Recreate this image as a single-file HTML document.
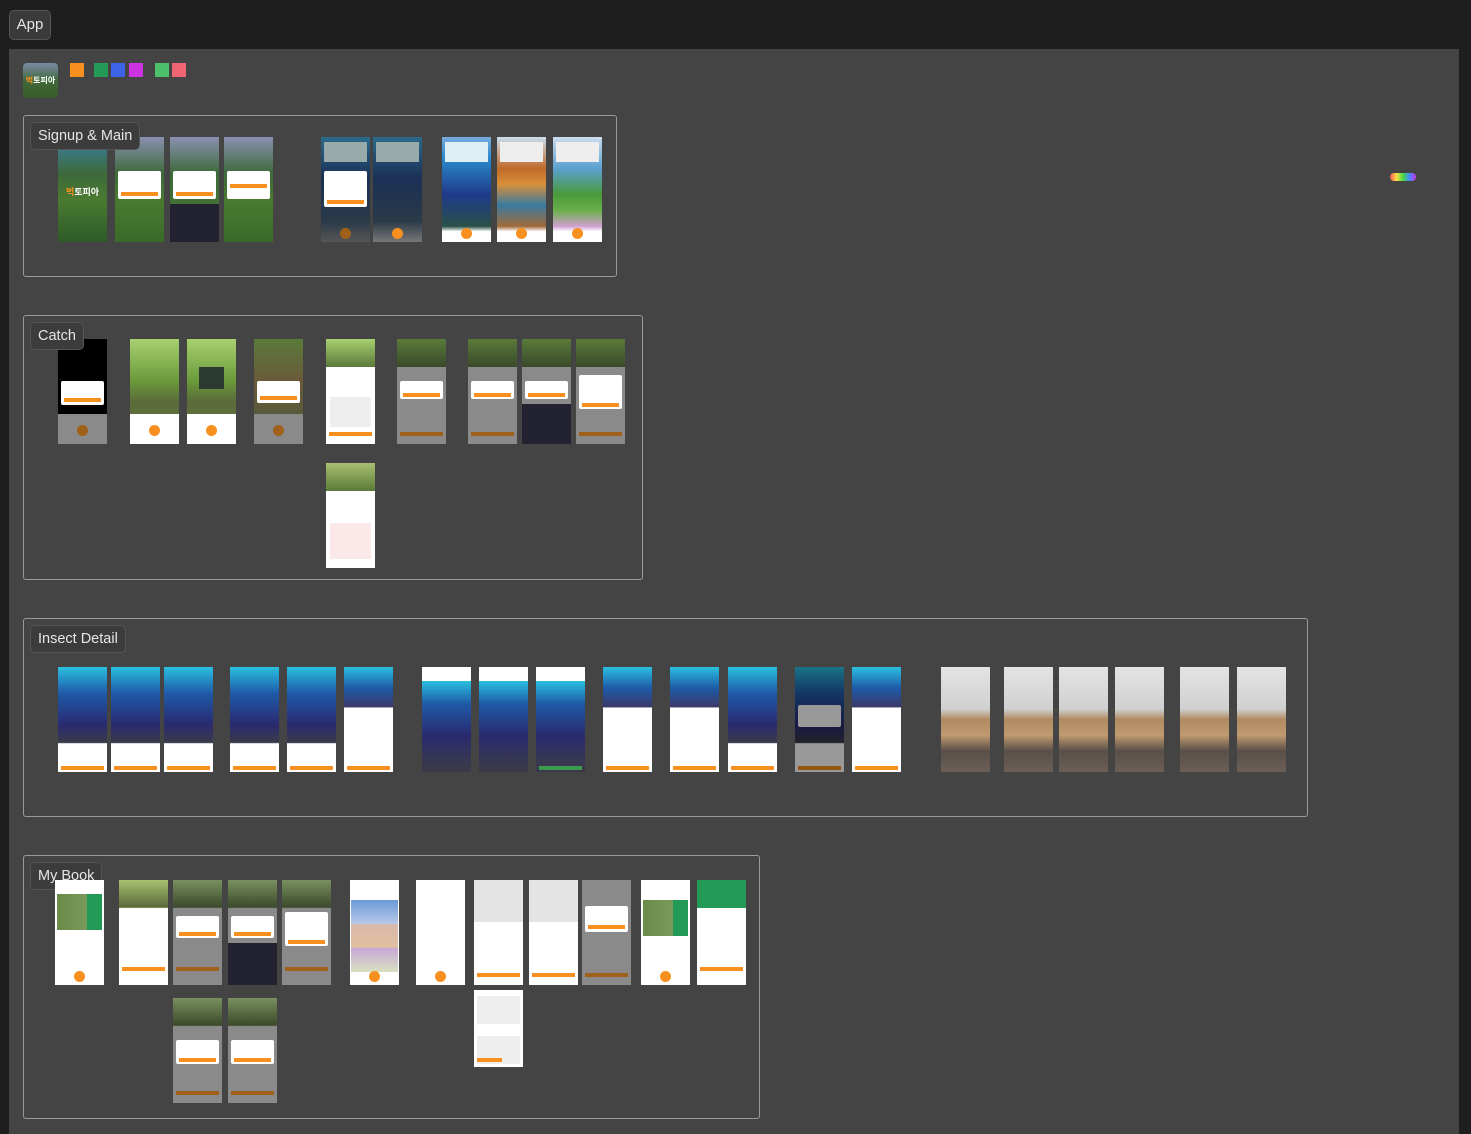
<!DOCTYPE html>
<html><head><meta charset="utf-8"><style>
*{margin:0;padding:0;box-sizing:border-box}
body{width:1471px;height:1134px;background:#1e1e1e;position:relative;overflow:hidden;font-family:"Liberation Sans","Noto Sans CJK KR",sans-serif}
.canvas{position:absolute;left:9px;top:49px;width:1450px;height:1085px;background:#444}
.app{position:absolute;left:9px;top:10px;width:42px;height:30px;background:#3a3a3a;border:1px solid #555;border-radius:5px;color:#e6e6e6;font-size:15px;line-height:28px;text-align:center}
.sec{position:absolute;border:1px solid #9a9a9a;border-radius:3px}
.lbl{position:absolute;left:30px;height:28px;background:#3c3c3c;border:1px solid #555;border-radius:5px;color:#e6e6e6;font-size:14.5px;line-height:26px;padding:0 7px}
.t{position:absolute;width:49px;height:105px;overflow:hidden}
.sw{position:absolute;top:63px;width:14px;height:14px}
.bar{position:absolute;left:3px;right:3px;height:4px;background:#f7901e}
.wb{position:absolute;left:0;right:0;bottom:0;background:#fff}
.gb{position:absolute;left:0;right:0;bottom:0;background:#8a8a8a}
.dlg{position:absolute;left:3px;right:3px;background:#fff;border-radius:2px}
.kb{position:absolute;left:0;right:0;bottom:0;height:38px;background:#222230}
.circ{position:absolute;left:19px;bottom:3px;width:11px;height:11px;border-radius:50%;background:#f7901e}
</style></head><body>
<div class="app">App</div>
<div class="canvas"></div>
<!-- logo -->
<div style="position:absolute;left:23px;top:63px;width:35px;height:35px;border-radius:4px;background:linear-gradient(#7a8aa8,#3f6a3a 50%,#3a5a2a);color:#fff;font-size:8px;font-weight:bold;line-height:35px;text-align:center"><span style="color:#f7901e">벅</span>토피아</div>
<div class="sw" style="left:70px;background:#f7901e"></div>
<div class="sw" style="left:94px;background:#239a55"></div>
<div class="sw" style="left:111px;background:#3d63e8"></div>
<div class="sw" style="left:129px;background:#cc33e0"></div>
<div class="sw" style="left:155px;background:#4cc06a"></div>
<div class="sw" style="left:172px;background:#f06474"></div>
<div style="position:absolute;left:1390px;top:173px;width:26px;height:8px;border-radius:4px;background:linear-gradient(90deg,#f55,#fd4,#4d4,#48f,#c3e)"></div>

<!-- Signup & Main -->
<div class="sec" style="left:23px;top:115px;width:594px;height:162px"></div>
<div class="t" style="left:58px;top:137px;background:linear-gradient(#3a7fa8,#3d6a3a 35%,#4a7a30 60%,#2e5a28)"><div style="position:absolute;top:48px;width:100%;text-align:center;color:#fff;font-size:9px;font-weight:bold"><span style="color:#f7901e">벅</span>토피아</div></div>
<div class="t" style="left:115px;top:137px;background:linear-gradient(#8a90b0,#3d6a3a 35%,#4a7a30 60%,#3a6a28)"><div class="dlg" style="top:34px;height:28px"><div class="bar" style="bottom:3px"></div></div></div>
<div class="t" style="left:170px;top:137px;background:linear-gradient(#8a90b0,#3d6a3a 35%,#4a7a30)"><div class="dlg" style="top:34px;height:28px"><div class="bar" style="bottom:3px"></div></div><div class="kb"></div></div>
<div class="t" style="left:224px;top:137px;background:linear-gradient(#8a90b0,#3d6a3a 35%,#4a7a30 60%,#3a6a28)"><div class="dlg" style="top:34px;height:28px"><div class="bar" style="bottom:11px"></div></div></div>
<div class="t" style="left:321px;top:137px;background:linear-gradient(#2a6a8a,#1b3055 40%,#2a3a48 80%,#555)"><div style="position:absolute;top:5px;left:3px;right:3px;height:20px;background:#9aa"></div><div class="dlg" style="top:34px;height:36px"><div class="bar" style="bottom:3px"></div></div><div class="circ" style="background:#a0601a"></div></div>
<div class="t" style="left:373px;top:137px;background:linear-gradient(#2a6a8a,#1b3055 40%,#2a3a48 80%,#777)"><div style="position:absolute;top:5px;left:3px;right:3px;height:20px;background:#9aa"></div><div class="circ"></div></div>
<div class="t" style="left:442px;top:137px;background:linear-gradient(#7ad,#2a8acc 20%,#1f3a8a 55%,#2a5048 85%,#fff 90%)"><div style="position:absolute;top:5px;left:3px;right:3px;height:20px;background:#ddeef4"></div><div class="circ"></div></div>
<div class="t" style="left:497px;top:137px;background:linear-gradient(#cde,#c06a2a 30%,#d8903a 45%,#3a7aa0 65%,#a06a3a 85%,#fff 90%)"><div style="position:absolute;top:5px;left:3px;right:3px;height:20px;background:#eee"></div><div class="circ"></div></div>
<div class="t" style="left:553px;top:137px;background:linear-gradient(#cde,#5aa0d0 30%,#4a9a3a 55%,#6ab04a 70%,#d0a0d0 85%,#fff 90%)"><div style="position:absolute;top:5px;left:3px;right:3px;height:20px;background:#eee"></div><div class="circ"></div></div>
<div class="lbl" style="top:122px">Signup &amp; Main</div>

<!-- Catch -->
<div class="sec" style="left:23px;top:315px;width:620px;height:265px"></div>
<div class="t" style="left:58px;top:339px;background:#000"><div class="dlg" style="top:42px;height:24px"><div class="bar" style="bottom:3px"></div></div><div class="gb" style="height:30px"><div class="circ" style="background:#a0601a;bottom:8px"></div></div></div>
<div class="t" style="left:130px;top:339px;background:linear-gradient(#a8d070,#6a9a3a 40%,#5a6a3a 60%,#6a7a40)"><div class="wb" style="height:30px"><div class="circ" style="bottom:8px"></div></div></div>
<div class="t" style="left:187px;top:339px;background:linear-gradient(#a8d070,#6a9a3a 40%,#5a6a3a 60%,#6a7a40)"><div style="position:absolute;left:12px;top:28px;width:25px;height:22px;background:#2a3a30"></div><div class="wb" style="height:30px"><div class="circ" style="bottom:8px"></div></div></div>
<div class="t" style="left:254px;top:339px;background:linear-gradient(#5a7a3a,#6a5a3a 40%,#4a5a3a)"><div class="dlg" style="top:42px;height:22px"><div class="bar" style="bottom:3px"></div></div><div class="gb" style="height:30px"><div class="circ" style="background:#a0601a;bottom:8px"></div></div></div>
<div class="t" style="left:326px;top:339px;background:#fff"><div style="height:28px;background:linear-gradient(#a8d070,#5a7a3a)"></div><div style="position:absolute;top:58px;left:4px;right:4px;height:30px;background:#eee"></div><div class="bar" style="bottom:8px"></div></div>
<div class="t" style="left:397px;top:339px;background:#8a8a8a"><div style="height:28px;background:linear-gradient(#5a7a3a,#3a4a2a)"></div><div class="dlg" style="top:42px;height:18px"><div class="bar" style="bottom:2px"></div></div><div class="bar" style="bottom:8px;background:#a0601a"></div></div>
<div class="t" style="left:468px;top:339px;background:#8a8a8a"><div style="height:28px;background:linear-gradient(#5a7a3a,#3a4a2a)"></div><div class="dlg" style="top:42px;height:18px"><div class="bar" style="bottom:2px"></div></div><div class="bar" style="bottom:8px;background:#a0601a"></div></div>
<div class="t" style="left:522px;top:339px;background:#8a8a8a"><div style="height:28px;background:linear-gradient(#5a7a3a,#3a4a2a)"></div><div class="dlg" style="top:42px;height:18px"><div class="bar" style="bottom:2px"></div></div><div class="kb" style="height:40px"></div></div>
<div class="t" style="left:576px;top:339px;background:#8a8a8a"><div style="height:28px;background:linear-gradient(#5a7a3a,#3a4a2a)"></div><div class="dlg" style="top:36px;height:34px"><div class="bar" style="bottom:2px"></div></div><div class="bar" style="bottom:8px;background:#a0601a"></div></div>
<div class="t" style="left:326px;top:463px;background:#fff"><div style="height:28px;background:linear-gradient(#a8c070,#5a7a3a)"></div><div style="position:absolute;top:60px;left:4px;right:4px;height:36px;background:#fbe8e8"></div></div>
<div class="lbl" style="top:322px">Catch</div>

<!-- Insect Detail -->
<div class="sec" style="left:23px;top:618px;width:1285px;height:199px"></div>
<div id="id"></div>
<div class="lbl" style="top:625px">Insect Detail</div>

<!-- My Book -->
<div class="sec" style="left:23px;top:855px;width:737px;height:264px"></div>
<div id="mb"></div>
<div class="lbl" style="top:862px">My Book</div>

<style>
.fd{background:linear-gradient(#2ac0e0,#1f5aa8 25%,#2a2a70 55%,#3a3a4a 72%,#fff 73%)}
.fdf{background:linear-gradient(#2ac0e0,#1f5aa8 25%,#2a2a70 60%,#3a3a4a 95%)}
.fdw{background:linear-gradient(#2ac0e0,#1f5aa8 20%,#3a3a6a 38%,#fff 39%)}
.rm{background:linear-gradient(#e4e4e4,#d0d0d0 40%,#b08a60 50%,#c09a70 65%,#5a5048 80%,#6a5e56)}
.wt{background:#fff}
</style>
<div class="t fd" style="left:58px;top:667px"><div class="bar" style="bottom:2px"></div></div>
<div class="t fd" style="left:111px;top:667px"><div class="bar" style="bottom:2px"></div></div>
<div class="t fd" style="left:164px;top:667px"><div class="bar" style="bottom:2px"></div></div>
<div class="t fd" style="left:230px;top:667px"><div class="bar" style="bottom:2px"></div></div>
<div class="t fd" style="left:287px;top:667px"><div class="bar" style="bottom:2px"></div></div>
<div class="t fdw" style="left:344px;top:667px"><div class="bar" style="bottom:2px"></div></div>
<div class="t fdf" style="left:422px;top:667px;border-top:14px solid #fff"></div>
<div class="t fdf" style="left:479px;top:667px;border-top:14px solid #fff"></div>
<div class="t fdf" style="left:536px;top:667px;border-top:14px solid #fff"><div class="bar" style="bottom:2px;background:#3a9a50"></div></div>
<div class="t fdw" style="left:603px;top:667px"><div class="bar" style="bottom:2px"></div></div>
<div class="t fdw" style="left:670px;top:667px"><div class="bar" style="bottom:2px"></div></div>
<div class="t fd" style="left:728px;top:667px"><div class="bar" style="bottom:2px"></div></div>
<div class="t fd" style="left:795px;top:667px;filter:brightness(.6)"><div class="dlg" style="top:38px;height:22px"></div><div class="bar" style="bottom:2px"></div></div>
<div class="t fdw" style="left:852px;top:667px"><div class="bar" style="bottom:2px"></div></div>
<div class="t rm" style="left:941px;top:667px"></div>
<div class="t rm" style="left:1004px;top:667px"></div>
<div class="t rm" style="left:1059px;top:667px"></div>
<div class="t rm" style="left:1115px;top:667px"></div>
<div class="t rm" style="left:1180px;top:667px"></div>
<div class="t rm" style="left:1237px;top:667px"></div>

<style>
.bk{background:linear-gradient(#a8c070,#5a6a3a 26%,#fff 27%)}
.bkg{background:linear-gradient(#7a9060,#3a4a2a 26%,#8a8a8a 27%)}
</style>
<div class="t wt" style="left:55px;top:880px"><div style="position:absolute;top:14px;left:2px;right:2px;height:36px;background:linear-gradient(90deg,#6a8a4a,#7a9a5a 66%,#239a55 67%)"></div><div class="circ"></div></div>
<div class="t bk" style="left:119px;top:880px"><div class="bar" style="bottom:14px"></div></div>
<div class="t bkg" style="left:173px;top:880px"><div class="dlg" style="top:36px;height:22px"><div class="bar" style="bottom:2px"></div></div><div class="bar" style="bottom:14px;background:#a0601a"></div></div>
<div class="t bkg" style="left:228px;top:880px"><div class="dlg" style="top:36px;height:22px"><div class="bar" style="bottom:2px"></div></div><div class="kb" style="height:42px"></div></div>
<div class="t bkg" style="left:282px;top:880px"><div class="dlg" style="top:32px;height:34px"><div class="bar" style="bottom:2px"></div></div><div class="bar" style="bottom:14px;background:#a0601a"></div></div>
<div class="t wt" style="left:350px;top:880px"><div style="position:absolute;top:20px;left:1px;right:1px;height:72px;background:linear-gradient(#6a9ad8,#b8c8e8 33%,#d8b8a8 34%,#e0c0a0 66%,#c8a8d8 67%,#d8e0c0)"></div><div class="circ"></div></div>
<div class="t wt" style="left:416px;top:880px"><div class="circ"></div></div>
<div class="t wt" style="left:474px;top:880px"><div style="height:42px;background:#e4e4e4"></div><div class="bar" style="bottom:8px"></div></div>
<div class="t wt" style="left:529px;top:880px"><div style="height:42px;background:#e4e4e4"></div><div class="bar" style="bottom:8px"></div></div>
<div class="t" style="left:582px;top:880px;background:#8a8a8a"><div class="dlg" style="top:26px;height:26px"><div class="bar" style="bottom:3px"></div></div><div class="bar" style="bottom:8px;background:#a0601a"></div></div>
<div class="t wt" style="left:641px;top:880px"><div style="position:absolute;top:20px;left:2px;right:2px;height:36px;background:linear-gradient(90deg,#6a8a4a,#7a9a5a 66%,#239a55 67%)"></div><div class="circ"></div></div>
<div class="t wt" style="left:697px;top:880px"><div style="height:28px;background:#239a55"></div><div class="bar" style="bottom:14px"></div></div>
<div class="t bkg" style="left:173px;top:998px"><div class="dlg" style="top:42px;height:24px"><div class="bar" style="bottom:2px"></div></div><div class="bar" style="bottom:8px;background:#a0601a"></div></div>
<div class="t bkg" style="left:228px;top:998px"><div class="dlg" style="top:42px;height:24px"><div class="bar" style="bottom:2px"></div></div><div class="bar" style="bottom:8px;background:#a0601a"></div></div>
<div class="t wt" style="left:474px;top:990px;height:77px"><div style="position:absolute;top:6px;left:3px;right:3px;height:28px;background:#eee"></div><div style="position:absolute;top:46px;left:3px;right:3px;height:28px;background:#eee"></div><div class="bar" style="bottom:5px;width:25px"></div></div>
</body></html>
